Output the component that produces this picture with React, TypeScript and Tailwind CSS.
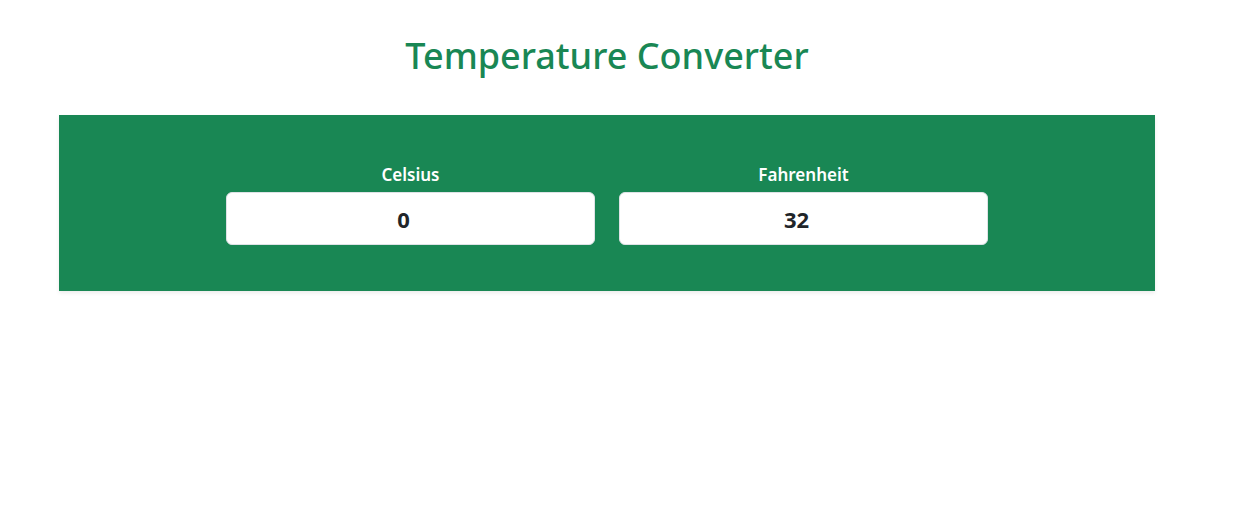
import React from "react";

export default function App() {
  return (
    <div
      className="min-h-[520px] w-[1234px] bg-white"
      style={{ fontFamily: '"Noto Sans", "Open Sans", sans-serif' }}
    >
      <div className="ml-[59px] flex w-[1096px] flex-col pt-[36px]">
        <h2 className="text-center text-[36px] font-medium leading-[40px] text-[#198754]">
          Temperature Converter
        </h2>
        <div className="mt-[39px] flex justify-center gap-6 bg-[#198754] px-12 pb-[46px] pt-12 shadow-[0_2px_4px_rgba(0,0,0,0.08)]">
          <div className="flex w-[369px] flex-col items-center">
            <label className="mb-[5px] text-[17px] font-semibold leading-6 text-white">
              Celsius
            </label>
            <input
              readOnly
              value="0"
              className="h-[53px] w-full rounded-md border border-[#dee2e6] bg-white pr-[14px] text-center text-[22px] font-bold text-[#212529] outline-none"
            />
          </div>
          <div className="flex w-[369px] flex-col items-center">
            <label className="mb-[5px] text-[17px] font-semibold leading-6 text-white">
              Fahrenheit
            </label>
            <input
              readOnly
              value="32"
              className="h-[53px] w-full rounded-md border border-[#dee2e6] bg-white pr-[14px] text-center text-[22px] font-bold text-[#212529] outline-none"
            />
          </div>
        </div>
      </div>
    </div>
  );
}
